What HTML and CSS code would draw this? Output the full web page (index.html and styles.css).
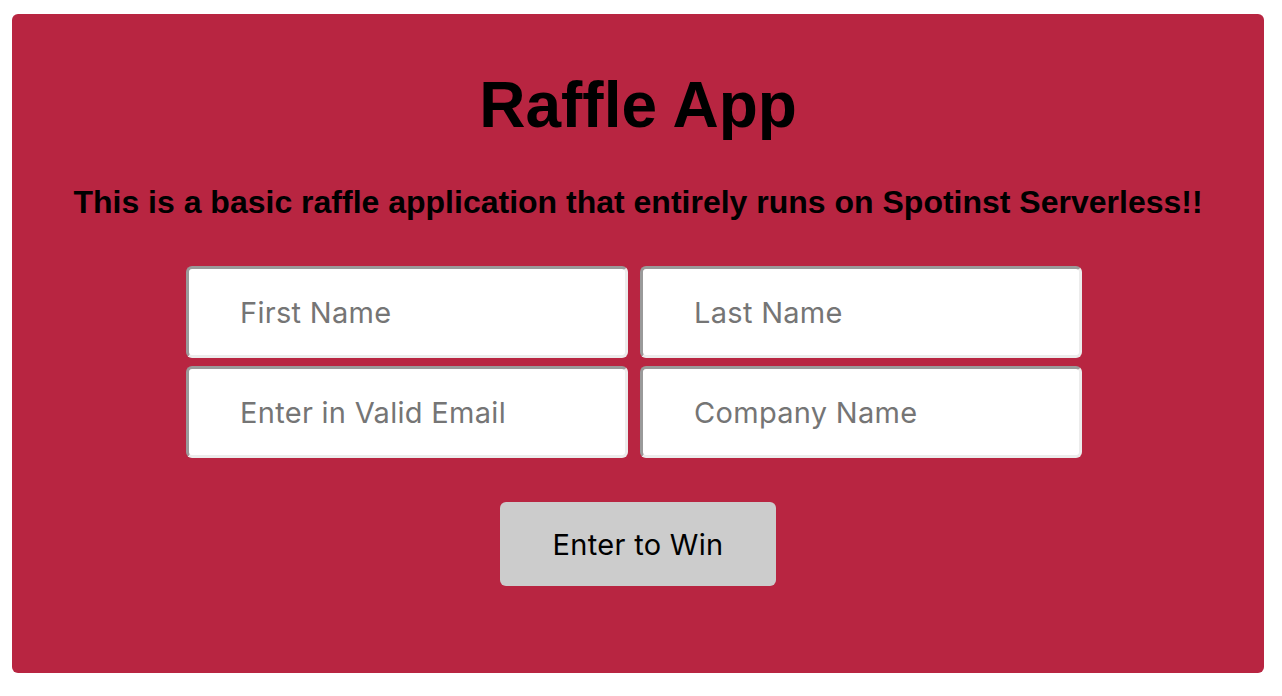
FILE: index.html
```html
<!DOCTYPE html>
<html>
<head>
<meta charset="utf-8">
<title>Raffle App</title>
<link rel="stylesheet" href="styles.css">
</head>
<body>
<main class="card">
  <h1 class="title">Raffle App</h1>
  <p class="subtitle">This is a basic raffle application that entirely runs on Spotinst Serverless!!</p>
  <form class="form">
    <div class="fields">
      <input class="field" type="text" placeholder="First Name">
      <input class="field" type="text" placeholder="Last Name">
      <input class="field" type="email" placeholder="Enter in Valid Email">
      <input class="field" type="text" placeholder="Company Name">
    </div>
    <button class="submit" type="button">Enter to Win</button>
  </form>
</main>
</body>
</html>
```
FILE: styles.css
```css
html, body {
  margin: 0;
  padding: 0;
  background: #ffffff;
}
body {
  padding: 14px 18px 23px 12px;
  font-family: "Liberation Sans", Arial, sans-serif;
}
.card {
  height: 659px;
  box-sizing: border-box;
  background: #b82541;
  border-radius: 6px;
  display: flex;
  flex-direction: column;
  align-items: center;
  padding-top: 51px;
}
.title {
  margin: 0;
  font-size: 64px;
  font-weight: bold;
  line-height: 80px;
  color: #000;
}
.subtitle {
  margin: 38px 0 0;
  font-size: 32px;
  font-weight: bold;
  line-height: 38px;
  color: #000;
}
.form {
  margin-top: 45px;
  display: flex;
  flex-direction: column;
  align-items: center;
}
.fields {
  display: grid;
  grid-template-columns: 442px 442px;
  column-gap: 12px;
  row-gap: 8px;
  margin-right: 8px;
}
.field {
  box-sizing: border-box;
  width: 442px;
  height: 92px;
  margin: 0;
  padding: 0 0 0 51px;
  background: #fff;
  border: 3px solid;
  border-color: #9a9a9a #ececec #ececec #9a9a9a;
  border-radius: 6px;
  font-family: Inter, "Liberation Sans", sans-serif;
  font-size: 29px;
  letter-spacing: 0.3px;
  color: #333;
  outline: none;
}
.field::placeholder {
  color: #757575;
  opacity: 1;
}
.submit {
  margin-top: 44px;
  width: 276px;
  height: 84px;
  background: #cccccc;
  border: none;
  border-radius: 6px;
  font-family: Inter, "Liberation Sans", sans-serif;
  font-size: 29px;
  letter-spacing: 0.3px;
  color: #000;
  padding: 0;
  cursor: pointer;
}
```
